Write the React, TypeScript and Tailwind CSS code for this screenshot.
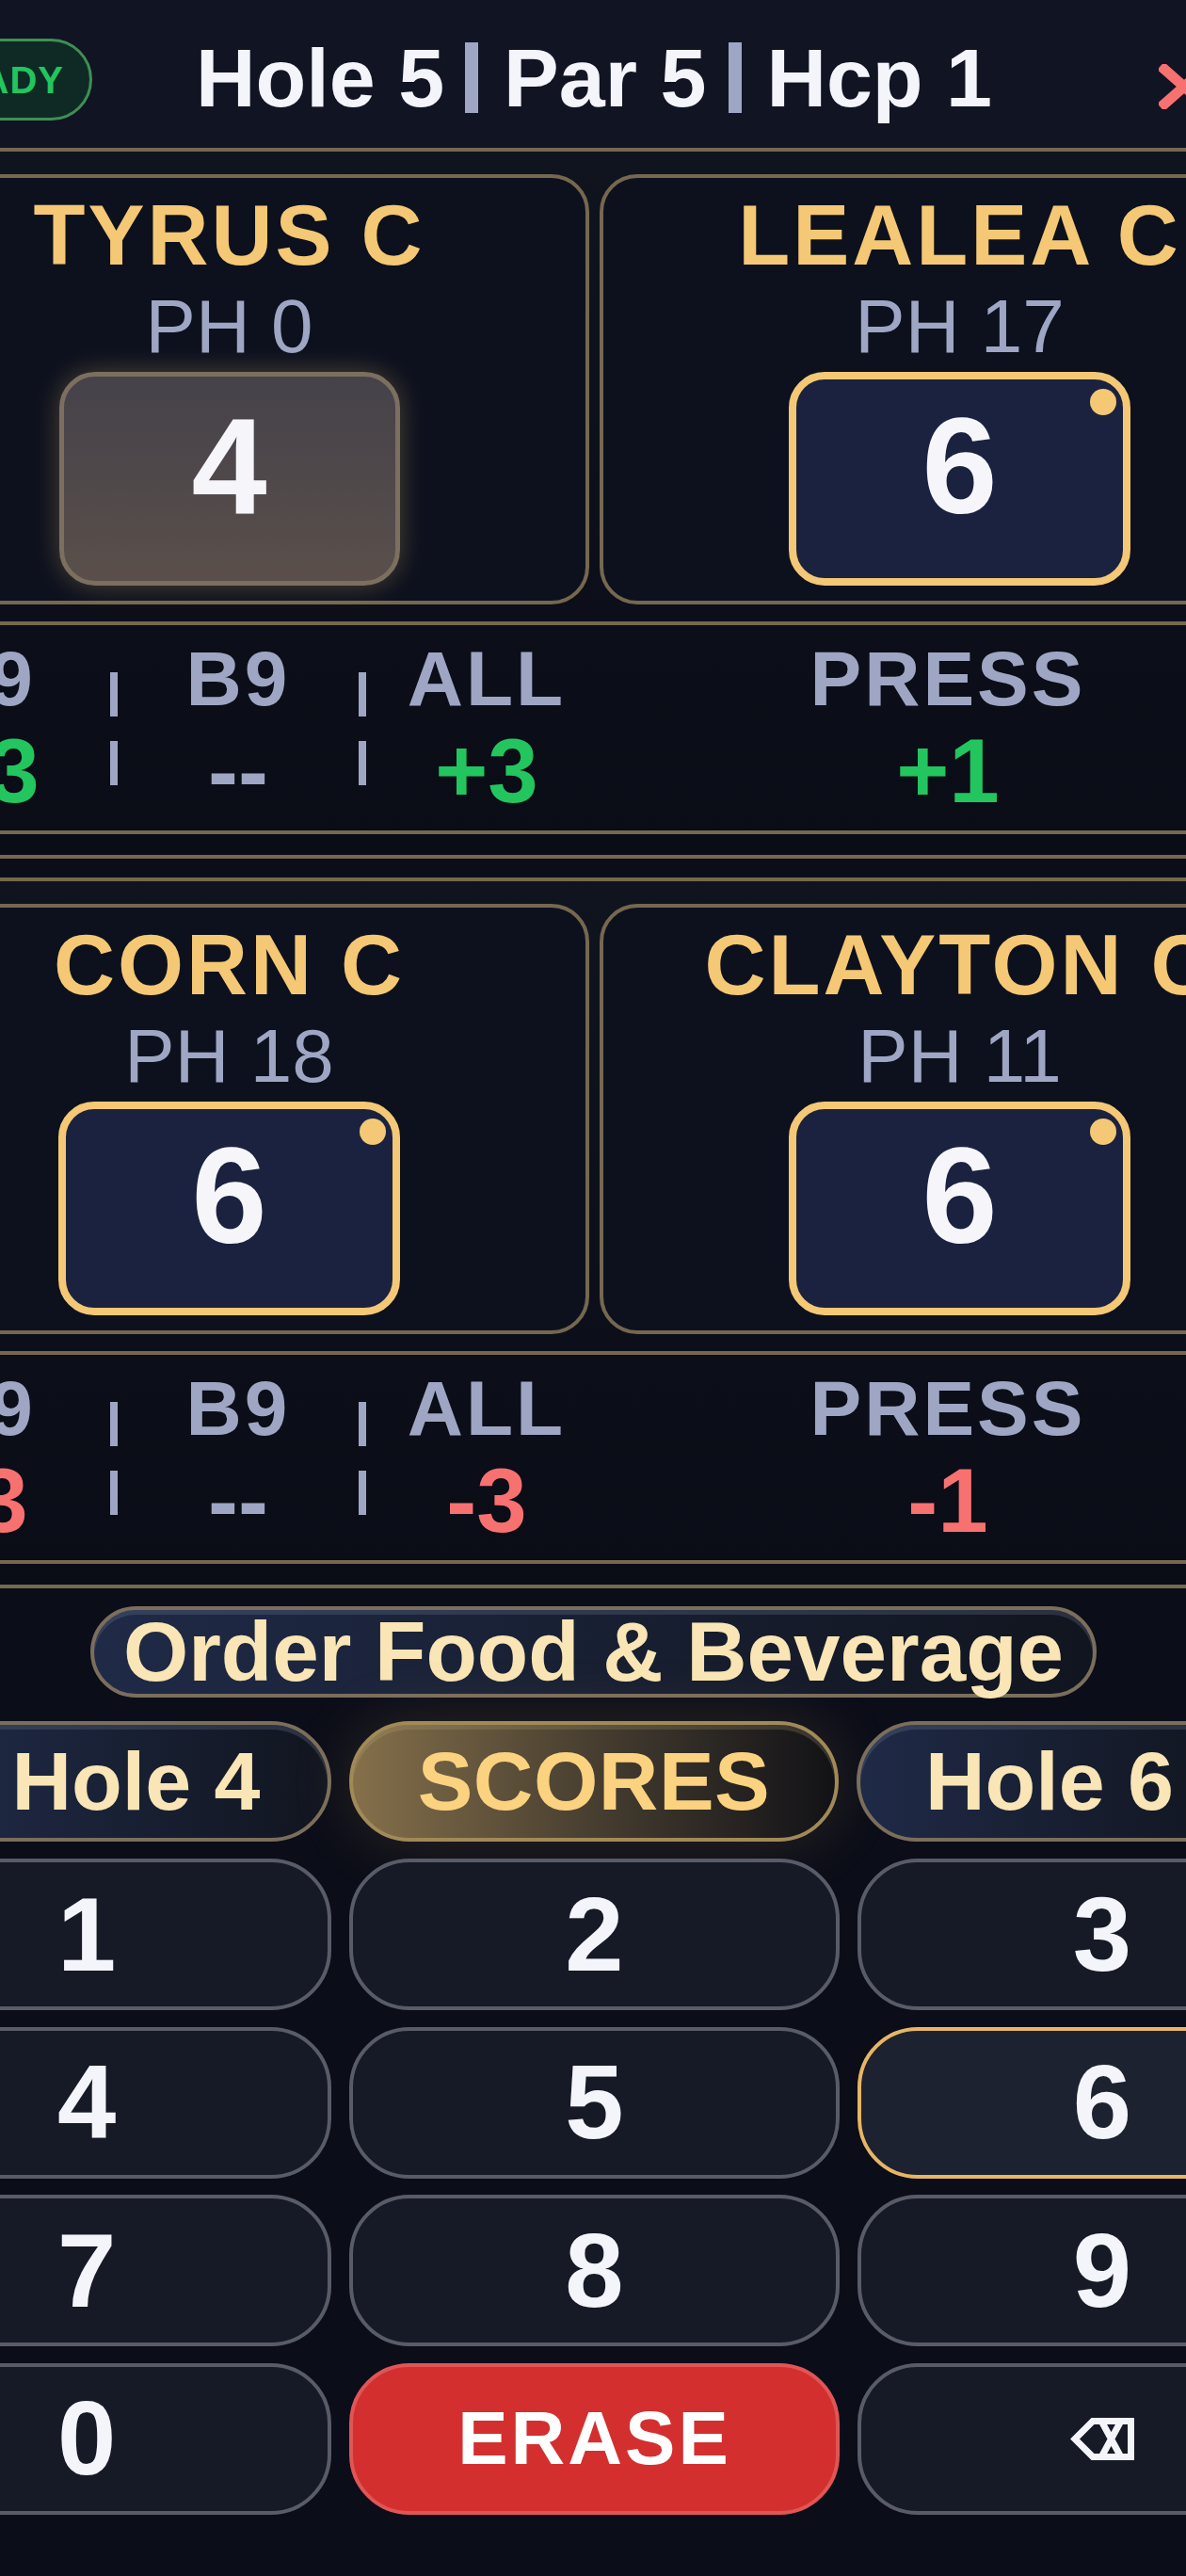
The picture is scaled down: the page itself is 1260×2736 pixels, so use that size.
import { clsx } from "clsx";

type Score = { name: string; ph: number; score: number; active?: boolean };
type Stat = { label: string; value: string; tone: string };

const sections: { players: Score[]; tone: string; total: string; press: string }[] = [
    {
        players: [
            { name: "TYRUS C", ph: 0, score: 4, active: true },
            { name: "LEALEA C", ph: 17, score: 6 },
        ],
        tone: "text-[#22c55e]",
        total: "+3",
        press: "+1",
    },
    {
        players: [
            { name: "CORN C", ph: 18, score: 6 },
            { name: "CLAYTON C", ph: 11, score: 6 },
        ],
        tone: "text-[#f87171]",
        total: "-3",
        press: "-1",
    },
];

const keys = ["1", "2", "3", "4", "5", "6", "7", "8", "9", "0"];

function PlayerCard({ player }: { player: Score }) {
    return (
        <div className="flex h-[457px] w-[765px] flex-col items-center rounded-[40px] border-[4px] border-[#75684f] bg-[#0d111e] pt-[11px]">
            <p className="whitespace-nowrap text-[90px] leading-[100px] font-bold tracking-[3px] text-[#f4c874]">{player.name}</p>
            <p className="mt-[2px] text-[80px] leading-[90px] text-[#9ea6c4]">PH {player.ph}</p>
            {player.active ? (
                <div className="mt-[3px] flex h-[227px] w-[362px] items-center justify-center rounded-[38px] border-[5px] border-[#7c6f5f] bg-gradient-to-b from-[#45424a] to-[#5a4f4a] pb-[26px] text-[144px] leading-none font-bold text-[#f6f6fa] shadow-[0_0_28px_rgba(244,200,116,0.28)]">
                    {player.score}
                </div>
            ) : (
                <div className="relative mt-[3px] flex h-[227px] w-[363px] items-center justify-center rounded-[38px] border-[8px] border-[#f4c874] bg-[#1a2240] pb-[26px] text-[144px] leading-none font-bold text-[#f6f6fa]">
                    {player.score}
                    <span className="absolute top-[10px] right-[7px] h-[28px] w-[28px] rounded-full bg-[#f4c874]" />
                </div>
            )}
        </div>
    );
}

function StatColumn({ stat, className }: { stat: Stat; className: string }) {
    return (
        <div className={clsx("flex shrink-0 flex-col items-center", className)}>
            <p className="text-[82px] leading-[90px] font-bold tracking-[3px] whitespace-nowrap text-[#9ea6c4]">{stat.label}</p>
            <p className={clsx("mt-[8px] text-[96px] leading-[90px] font-bold", stat.tone)}>{stat.value}</p>
        </div>
    );
}

function Divider() {
    return (
        <div className="flex w-[8px] shrink-0 flex-col gap-[26px] pt-[38px]">
            <span className="h-[47px] w-[8px] bg-[#9ea6c4]" />
            <span className="h-[47px] w-[8px] bg-[#9ea6c4]" />
        </div>
    );
}

export default function App() {
    return (
        <div className="h-[2736px] w-[1260px] overflow-hidden bg-[#0b0d18] font-['Liberation_Sans',Arial,sans-serif]">
            <div className="ml-[-167px] w-[1598px]">
                <header className="flex h-[157px] items-center bg-[#111423] pl-[39px]">
                    <div className="mt-[12px] flex h-[87px] w-[226px] shrink-0 items-center justify-end rounded-full border-[3px] border-[#3f8f55] bg-[#0f2a24] pr-[27px] text-[40px] font-bold tracking-[1px] text-[#22c55e]">
                        READY
                    </div>
                    <div className="mt-[8px] ml-[110px] flex shrink-0 items-center text-[88px] leading-none font-bold whitespace-nowrap text-[#f4f5fa]">
                        <span>Hole 5</span>
                        <span className="mr-[27px] ml-[22px] h-[75px] w-[14px] bg-[#9ea6c4]" />
                        <span>Par 5</span>
                        <span className="mr-[26px] ml-[24px] h-[75px] w-[14px] bg-[#9ea6c4]" />
                        <span>Hcp 1</span>
                    </div>
                    <svg viewBox="0 0 54 48" className="mt-[26px] mr-[146px] ml-auto h-[48px] w-[54px] shrink-0 text-[#f87171]" fill="none" stroke="currentColor" strokeWidth="11">
                        <path d="M2 2 L52 46 M52 2 L2 46" />
                    </svg>
                </header>

                {sections.map((section, i) => (
                    <section
                        key={i}
                        className={clsx(
                            "h-[755px] border-t-[4px] border-b-[4px] border-[#75684f] bg-gradient-to-b from-[#10141f] to-[#0a0c16] pt-[24px]",
                            i === 1 && "mt-[20px]",
                        )}
                    >
                        <div className="flex gap-[11px] pl-[28px]">
                            {section.players.map((player) => (
                                <PlayerCard key={player.name} player={player} />
                            ))}
                        </div>
                        <div className="mt-[18px] flex h-[226px] border-t-[4px] border-b-[4px] border-[#75684f] pt-[12px] pl-[24px]">
                            <StatColumn className="w-[260px]" stat={{ label: "F9", value: section.total, tone: section.tone }} />
                            <Divider />
                            <StatColumn className="w-[256px]" stat={{ label: "B9", value: "--", tone: "text-[#9ea6c4]" }} />
                            <Divider />
                            <StatColumn className="w-[256px]" stat={{ label: "ALL", value: section.total, tone: section.tone }} />
                            <StatColumn className="w-[724px]" stat={{ label: "PRESS", value: section.press, tone: section.tone }} />
                        </div>
                    </section>
                ))}

                <div className="pt-[19px]">
                    <button className="ml-[263px] flex h-[97px] w-[1069px] items-center justify-center rounded-full border-[4px] border-[#7a6e5c] bg-gradient-to-r from-[#1f2a47] to-[#11151f] text-[89px] leading-none font-bold text-[#f9e5b5] shadow-[inset_0_5px_0_rgba(120,130,160,0.25)]">
                        Order Food &amp; Beverage
                    </button>

                    <div className="mt-[25px] ml-[-1px] flex gap-x-[19px]">
                        <button className="ml-[105px] flex h-[128px] w-[415px] shrink-0 items-center justify-center rounded-full border-[4px] border-[#7a6e5c] bg-gradient-to-r from-[#1f2a47] to-[#11151f] text-[88px] leading-none font-bold text-[#f9e5b5] shadow-[inset_0_5px_0_rgba(120,130,160,0.25)]">
                            Hole 4
                        </button>
                        <button className="flex h-[128px] w-[520px] shrink-0 items-center justify-center rounded-full border-[4px] border-[#a08a58] bg-gradient-to-r from-[#85704a] to-[#121216] text-[88px] leading-none font-bold tracking-[0.5px] text-[#fbd27f] shadow-[0_0_70px_rgba(244,200,116,0.14),inset_0_5px_0_rgba(200,180,130,0.2)]">
                            SCORES
                        </button>
                        <button className="flex h-[128px] w-[410px] shrink-0 items-center justify-center rounded-full border-[4px] border-[#7a6e5c] bg-gradient-to-r from-[#1f2a47] to-[#11151f] text-[88px] leading-none font-bold text-[#f9e5b5] shadow-[inset_0_5px_0_rgba(120,130,160,0.25)]">
                            Hole 6
                        </button>
                    </div>

                    <div className="mt-[18px] ml-[-1px] grid grid-cols-3 gap-x-[19px] gap-y-[17.5px]">
                        {keys.map((key) => (
                            <button
                                key={key}
                                className={clsx(
                                    "flex h-[161px] items-center justify-center rounded-[64px] border-[4px] text-[112px] leading-none font-bold text-[#f4f5fa]",
                                    key === "6" ? "border-[#e8b565] bg-[#1c2230]" : "border-[#585c68] bg-[#151a26]",
                                )}
                            >
                                {key}
                            </button>
                        ))}
                        <button className="flex h-[161px] items-center justify-center rounded-[64px] border-[4px] border-[#e05555] bg-[#d32f2f] text-[80px] leading-none font-bold tracking-[3px] text-white">
                            ERASE
                        </button>
                        <button className="flex h-[161px] items-center justify-center rounded-[64px] border-[4px] border-[#585c68] bg-[#151a26]">
                            <svg viewBox="0 0 68 45" className="h-[45px] w-[68px] text-[#f4f5fa]" fill="none" stroke="currentColor" strokeWidth="7">
                                <path d="M5 22.5 L24 3.5 H64.5 V41.5 H24 Z" />
                                <path d="M34 5 L53 40 M53 5 L34 40" />
                            </svg>
                        </button>
                    </div>
                </div>
            </div>
        </div>
    );
}
